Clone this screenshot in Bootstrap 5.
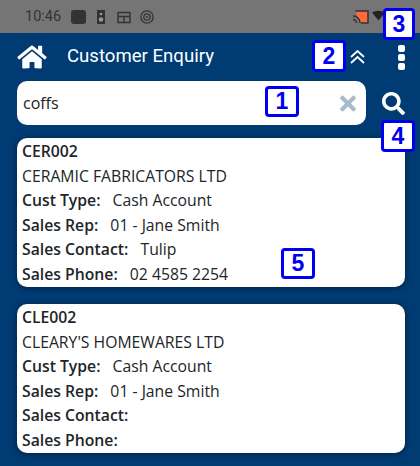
<!DOCTYPE html>
<html lang="en">
<head>
    <meta charset="UTF-8">
    <meta name="viewport" content="width=device-width, initial-scale=1">
    <title>Customer Enquiry</title>
    <link href="https://cdn.jsdelivr.net/npm/bootstrap@5.3.0/dist/css/bootstrap.min.css" rel="stylesheet">
    <style>
        html, body { height: 466px; overflow: hidden; }
        body { background: #003b73; font-family: "Open Sans", sans-serif; font-size: 15.75px; color: #212529; position: relative; }
        .status-strip { height: 33px; background: #757575; padding: 0 34px 0 25px; color: #333; font-family: Roboto, sans-serif; font-size: 14.5px; }
        .status-clock { width: 46px; }
        .top-strip { height: 48px; padding: 0 15px 0 17px; color: #fff; }
        .page-title { font-family: Roboto, sans-serif; font-size: 18.6px; margin-left: 20px; }
        .menu-dots { margin-left: 33px; }
        .search-strip { padding: 0 15px 13px 17px; }
        .search-box { width: 349px; height: 44px; background: #fff; border-radius: 10px; padding: 0 10px 0 6px; font-size: 16px; color: #222; }
        .result-list { padding: 0 15px 0 17px; gap: 17px; }
        .result-card { border-radius: 10px; border: 0; padding: 1px 5px 0; height: 149px; box-shadow: 0 1px 6px rgba(0, 0, 0, .45); }
        .result-card div { height: 24.5px; line-height: 24.5px; white-space: nowrap; }
        .result-card b { font-weight: 600; margin-right: 8px; }
        .tag-no { position: absolute; background: #fff; border: 3px solid #0000f0; border-radius: 4px; color: #0000f0; font-family: "Liberation Sans", sans-serif; font-weight: 700; font-size: 23px; line-height: 1; display: flex; align-items: center; justify-content: center; }
        .tag-1 { left: 265px; top: 86px; width: 34px; height: 31px; }
        .tag-2 { left: 312px; top: 40px; width: 34px; height: 32px; }
        .tag-3 { left: 383px; top: 8px; width: 32px; height: 32px; }
        .tag-4 { left: 381px; top: 120px; width: 34px; height: 32px; }
        .tag-5 { left: 281px; top: 248px; width: 34px; height: 31px; }
    </style>
</head>
<body>
    <div class="status-strip d-flex align-items-center">
        <span class="status-clock">10:46</span>
        <svg width="90" height="16" viewBox="0 0 90 16" fill="#333">
            <rect x="0" y="1" width="15" height="14" rx="3"/>
            <path d="M26 1h8v14h-8z"/>
            <circle cx="30" cy="5" r="1.300" fill="#999"/>
            <circle cx="30" cy="10.500" r="2.200" fill="#999"/>
            <path d="M47 3.500h12v10h-12zM53 8v5M47 7.500h12" fill="none" stroke="#333" stroke-width="1.400"/>
            <circle cx="76" cy="8" r="6.200" fill="none" stroke="#333" stroke-width="1.300"/>
            <circle cx="76" cy="8" r="3.200" fill="none" stroke="#333" stroke-width="1.300"/>
            <circle cx="76" cy="8" r="1"/>
        </svg>
        <svg class="ms-auto" width="33" height="16" viewBox="0 0 33 16">
            <path d="M2 2h13v12H8" fill="#ff6b3d" stroke="#333" stroke-width="1.500"/>
            <path d="M0 7a7 7 0 0 1 7 7M0 10.500a3.500 3.500 0 0 1 3.500 3.500" fill="none" stroke="#333" stroke-width="1.500"/>
            <path d="M19 3.500q6.500-3.500 13 0l-6.500 8z" fill="#222"/>
        </svg>
    </div>

    <div class="top-strip d-flex align-items-center">
        <svg width="30" height="26" viewBox="0 0 576 512" fill="#fff"><path d="M280.37 148.26L96 300.11V464a16 16 0 0 0 16 16l112.06-.29a16 16 0 0 0 15.92-16V368a16 16 0 0 1 16-16h64a16 16 0 0 1 16 16v95.64a16 16 0 0 0 16 16.05L464 480a16 16 0 0 0 16-16V300L295.67 148.26a12.19 12.19 0 0 0-15.3 0zM571.6 251.47L488 182.56V44.05a12 12 0 0 0-12-12h-56a12 12 0 0 0-12 12v72.61L318.47 43a48 48 0 0 0-61 0L4.34 251.47a12 12 0 0 0-1.6 16.9l25.5 31A12 12 0 0 0 45.15 301l235.22-193.74a12.19 12.19 0 0 1 15.3 0L530.9 301a12 12 0 0 0 16.9-1.6l25.5-31a12 12 0 0 0-1.7-16.93z"/></svg>
        <span class="page-title">Customer Enquiry</span>
        <svg class="ms-auto" width="15" height="14" viewBox="0 0 15 14" fill="none" stroke="#fff" stroke-width="1.800"><path d="M1 7l6.500-6 6.500 6M1 13l6.500-6 6.500 6"/></svg>
        <svg class="menu-dots" width="7" height="25" viewBox="0 0 7 25" fill="#fff"><rect y="0" width="7" height="7" rx="2"/><rect y="9" width="7" height="7" rx="2"/><rect y="18" width="7" height="7" rx="2"/></svg>
    </div>

    <div class="search-strip d-flex align-items-center justify-content-between">
        <div class="search-box d-flex align-items-center justify-content-between">
            <span>coffs</span>
            <svg width="16" height="23" viewBox="0 0 352 512" fill="#a9bccd"><path d="M242.72 256l100.07-100.07c12.28-12.28 12.28-32.19 0-44.48l-22.24-22.24c-12.28-12.28-32.19-12.28-44.48 0L176 189.28 75.93 89.21c-12.28-12.28-32.19-12.28-44.48 0L9.21 111.45c-12.28 12.28-12.28 32.19 0 44.48L109.28 256 9.21 356.07c-12.28 12.28-12.28 32.19 0 44.48l22.24 22.24c12.28 12.28 32.2 12.28 44.48 0L176 322.72l100.07 100.07c12.28 12.28 32.2 12.28 44.48 0l22.24-22.24c12.28-12.28 12.28-32.19 0-44.48L242.72 256z"/></svg>
        </div>
        <svg width="23" height="23" viewBox="0 0 512 512" fill="#fff"><path d="M505 442.7L405.3 343c-4.500-4.500-10.600-7-17-7H372c27.600-35.300 44-79.700 44-128C416 93.100 322.900 0 208 0S0 93.100 0 208s93.100 208 208 208c48.300 0 92.700-16.400 128-44v16.300c0 6.400 2.500 12.500 7 17l99.700 99.700c9.400 9.400 24.600 9.400 33.900 0l28.300-28.300c9.400-9.400 9.400-24.600.1-34zM208 336c-70.700 0-128-57.200-128-128 0-70.700 57.200-128 128-128 70.700 0 128 57.200 128 128 0 70.700-57.200 128-128 128z"/></svg>
    </div>

    <div class="result-list d-flex flex-column">
        <div class="card result-card">
            <div><b>CER002</b></div>
            <div>CERAMIC FABRICATORS LTD</div>
            <div><b>Cust Type:</b> Cash Account</div>
            <div><b>Sales Rep:</b> 01 - Jane Smith</div>
            <div><b>Sales Contact:</b> Tulip</div>
            <div><b>Sales Phone:</b> 02 4585 2254</div>
        </div>
        <div class="card result-card">
            <div><b>CLE002</b></div>
            <div>CLEARY'S HOMEWARES LTD</div>
            <div><b>Cust Type:</b> Cash Account</div>
            <div><b>Sales Rep:</b> 01 - Jane Smith</div>
            <div><b>Sales Contact:</b></div>
            <div><b>Sales Phone:</b></div>
        </div>
    </div>

    <span class="tag-no tag-1">1</span>
    <span class="tag-no tag-2">2</span>
    <span class="tag-no tag-3">3</span>
    <span class="tag-no tag-4">4</span>
    <span class="tag-no tag-5">5</span>

    <script src="https://cdn.jsdelivr.net/npm/bootstrap@5.3.0/dist/js/bootstrap.bundle.min.js"></script>
</body>
</html>
